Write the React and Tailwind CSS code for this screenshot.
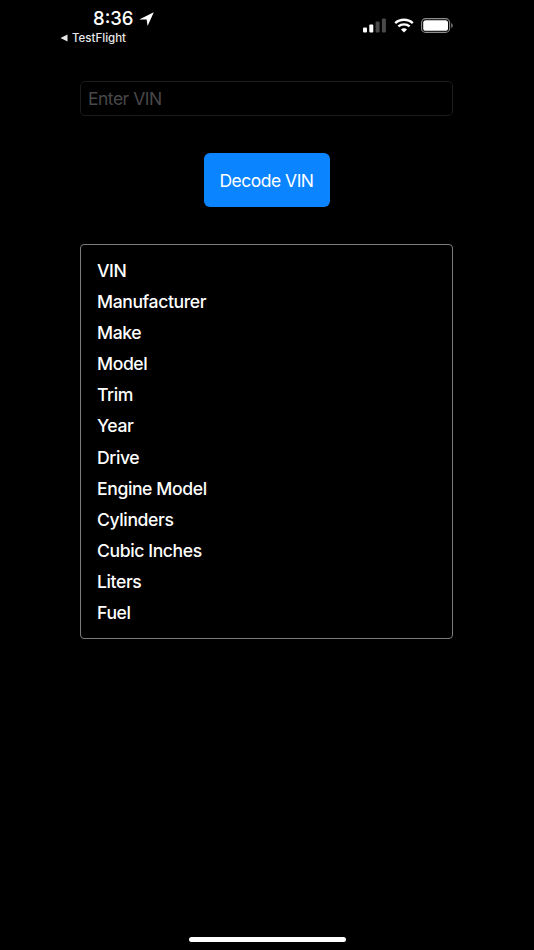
import React from 'react';

const FIELDS = ['VIN', 'Manufacturer', 'Make', 'Model', 'Trim', 'Year', 'Drive', 'Engine Model', 'Cylinders', 'Cubic Inches', 'Liters', 'Fuel'];

const StatusBar = () => (
  <div className="flex h-[46px] justify-between pl-[60px] pr-[81px] pt-[8px]">
    <div className="flex flex-col">
      <div className="flex h-[21px] items-center gap-[5px] pl-[33px] text-[18.5px] font-medium leading-[21px] text-white">
        <span>8:36</span>
        <svg width="15" height="14" viewBox="0 0 15 14" fill="white">
          <path d="M14.8 0.2 L0.2 7.4 L7.6 7.6 L8.6 13.9 Z" />
        </svg>
      </div>
      <div className="mt-[2px] flex items-center gap-[4px] text-[11.5px] font-medium leading-[14px] text-[#e8e8e8]">
        <svg width="8" height="8" viewBox="0 0 8 8" fill="#e8e8e8">
          <path d="M0.5 4 L7.5 0.4 L7.5 7.6 Z" />
        </svg>
        <span>TestFlight</span>
      </div>
    </div>
    <div className="mt-[10px] flex h-[15px] items-center gap-[7.5px]">
      <svg width="23" height="15" viewBox="0 0 23 15">
        <rect x="0" y="9.5" width="4" height="5" rx="1" fill="white" />
        <rect x="6.3" y="6.5" width="4" height="8" rx="1" fill="white" />
        <rect x="12.6" y="3.5" width="4" height="11" rx="1" fill="#4a4a4a" />
        <rect x="18.9" y="0.5" width="4" height="14" rx="1" fill="#4a4a4a" />
      </svg>
      <svg width="20" height="15" viewBox="0 0 20 15" fill="none" stroke="white" strokeWidth="2.3">
        <path d="M1.2 5.2 C6 0.6 14 0.6 18.8 5.2" />
        <path d="M4.4 8.4 C7.4 5.6 12.6 5.6 15.6 8.4" />
        <path d="M10 14.6 L7 11.4 C8.6 10 11.4 10 13 11.4 Z" fill="white" stroke="none" />
      </svg>
      <svg width="32" height="15" viewBox="0 0 32 15">
        <rect x="0.6" y="0.6" width="28" height="13.8" rx="4" fill="none" stroke="#8e8e8e" strokeWidth="1.1" />
        <rect x="2.2" y="2.2" width="24.8" height="10.6" rx="2.6" fill="white" />
        <path d="M30.3 5.2 C31.3 5.6 31.7 6.4 31.7 7.5 C31.7 8.6 31.3 9.4 30.3 9.8 Z" fill="#8e8e8e" />
      </svg>
    </div>
  </div>
);

export default function App() {
  return (
    <div className="flex h-[950px] w-[534px] flex-col overflow-hidden bg-black font-['Inter','Liberation_Sans',sans-serif] text-white">
      <StatusBar />
      <div className="flex flex-1 flex-col pl-[80px] pr-[81px] pt-[35px]">
        <div className="flex h-[35px] items-center rounded-[5px] border border-[#1c1c1e] pl-[7px] pt-[2px] text-[17.5px] tracking-[-0.5px] text-[#48484a]">
          Enter VIN
        </div>
        <button className="mx-auto mt-[37px] h-[54px] w-[126px] rounded-[6px] bg-[#0a84ff] pt-[2px] text-[17.5px] tracking-[-0.5px] text-white">
          Decode VIN
        </button>
        <div className="mt-[37px] flex h-[395px] flex-col rounded-[4px] border-[1.5px] border-[#7c7c7c] pl-[16px] pt-[10px]">
          {FIELDS.map((field) => (
            <div key={field} className="h-[31.1px] text-[17.6px] font-medium leading-[31px] tracking-[-0.4px] text-white">
              {field}
            </div>
          ))}
        </div>
      </div>
      <div className="mx-auto mb-[8px] h-[5px] w-[157px] rounded-full bg-white" />
    </div>
  );
}
